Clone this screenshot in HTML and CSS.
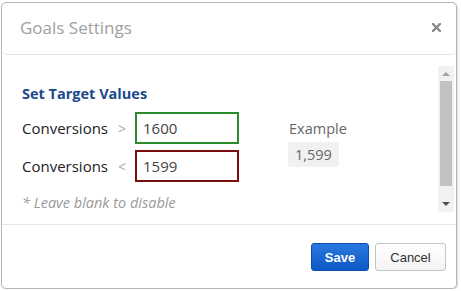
FILE: index.html
```html
<!DOCTYPE html>
<html lang="en">
<head>
    <meta charset="UTF-8">
    <title>Goals Settings</title>
    <link rel="stylesheet" href="styles.css">
</head>
<body>
    <div class="modal">
        <div class="modal-header">
            <h3 class="modal-title">Goals Settings</h3>
            <button class="close" title="Close">
                <svg width="9" height="9" viewBox="0 0 9 9"><path d="M1 1L8 8M8 1L1 8" stroke="#8a8a8a" stroke-width="2.4" stroke-linecap="square"/></svg>
            </button>
        </div>
        <div class="modal-body">
            <div class="body-content">
                <h4 class="section-title">Set Target Values</h4>
                <div class="target-grid">
                    <div class="targets">
                        <div class="target-row">
                            <label for="gt">Conversions</label>
                            <span class="op">&gt;</span>
                            <input type="text" id="gt" class="target-input above" value="1600">
                        </div>
                        <div class="target-row">
                            <label for="lt">Conversions</label>
                            <span class="op">&lt;</span>
                            <input type="text" id="lt" class="target-input below" value="1599">
                        </div>
                    </div>
                    <div class="example">
                        <div class="example-label">Example</div>
                        <span class="example-value">1,599</span>
                    </div>
                </div>
                <p class="hint">* Leave blank to disable</p>
            </div>
            <div class="scrollbar">
                <span class="arrow up"></span>
                <span class="thumb"></span>
                <span class="arrow down"></span>
            </div>
        </div>
        <div class="modal-footer">
            <button class="btn btn-primary">Save</button>
            <button class="btn btn-default">Cancel</button>
        </div>
    </div>
</body>
</html>
```
FILE: styles.css
```css
body {
    margin: 0;
    background-color: #fff;
    font-family: "Open Sans", Arial, sans-serif;
}
.modal {
    margin: 2px 0 0 1px;
    width: 454px;
    height: 285px;
    border: 1px solid #b5b5b5;
    border-radius: 5px;
    background-color: #fff;
    display: flex;
    flex-direction: column;
    box-shadow: 1px 1px 2px rgba(0, 0, 0, 0.15);
}
.modal-header {
    height: 51px;
    border-bottom: 1px solid #e5e5e5;
    border-radius: 0 0 5px 5px;
    display: flex;
    align-items: center;
    justify-content: space-between;
    padding: 0 15px 0 18px;
}
.modal-title {
    margin: 0;
    font-size: 17px;
    font-weight: normal;
    color: #a0a0a0;
    padding-bottom: 2px;
}
.close {
    border: none;
    background: none;
    padding: 0;
    cursor: pointer;
    display: flex;
    margin-bottom: 2px;
}
.modal-body {
    height: 169px;
    border-bottom: 1px solid #e5e5e5;
    display: flex;
}
.body-content {
    flex: 1;
    padding: 29px 0 0 20px;
}
.section-title {
    margin: 0 0 8px;
    font-size: 14.5px;
    font-weight: bold;
    color: #1b4a8a;
    line-height: 20px;
}
.target-grid {
    display: flex;
    align-items: flex-start;
}
.targets {
    display: flex;
    flex-direction: column;
    gap: 6px;
}
.target-row {
    display: flex;
    align-items: center;
}
.target-row label {
    width: 96px;
    font-size: 15px;
    color: #222;
}
.op {
    width: 17px;
    color: #aaa;
    font-size: 14px;
}
.target-input {
    width: 104px;
    height: 32px;
    box-sizing: border-box;
    padding: 0 6px;
    font-family: "Open Sans", Arial, sans-serif;
    font-size: 15px;
    color: #444;
    border: 2px solid;
    outline: none;
}
.target-input.above {
    border-color: #2b8a2b;
}
.target-input.below {
    border-color: #7a0d0d;
}
.example {
    margin: 7px 0 0 50px;
}
.example-label {
    font-size: 14.5px;
    color: #666;
    line-height: 20px;
    margin-bottom: 3px;
}
.example-value {
    display: inline-block;
    background-color: #f1f1f1;
    border-radius: 3px;
    padding: 0 7px;
    line-height: 25px;
    font-size: 14.5px;
    color: #666;
    margin-left: -1px;
}
.hint {
    margin: 11px 0 0;
    font-size: 14.5px;
    font-style: italic;
    color: #9a9a9a;
}
.scrollbar {
    width: 16px;
    margin: 11px 2px 12px 0;
    background-color: #f1f1f1;
    display: flex;
    flex-direction: column;
    align-items: center;
}
.thumb {
    width: 12px;
    flex: 1;
    background-color: #c1c1c1;
    margin: 0 0 16px;
}
.arrow {
    width: 0;
    height: 0;
    border-left: 4px solid transparent;
    border-right: 4px solid transparent;
    margin: 6px 0 5px;
}
.arrow.up {
    border-bottom: 4px solid #a3a3a3;
}
.arrow.down {
    border-top: 4px solid #505050;
    margin: 0 0 6px;
}
.modal-footer {
    flex: 1;
    display: flex;
    justify-content: flex-end;
    align-items: flex-start;
    gap: 6px;
    padding: 18px 10px 0 0;
}
.btn {
    height: 28px;
    font-family: "Liberation Sans", Arial, sans-serif;
    font-size: 13px;
    border-radius: 3px;
    cursor: pointer;
}
.btn-primary {
    width: 58px;
    color: #fff;
    font-weight: bold;
    border: 1px solid #0b4fae;
    background: linear-gradient(#2a78df, #0c58c4);
}
.btn-default {
    width: 71px;
    color: #333;
    border: 1px solid #c4c4c4;
    background: linear-gradient(#fff, #f3f3f3);
}
```
